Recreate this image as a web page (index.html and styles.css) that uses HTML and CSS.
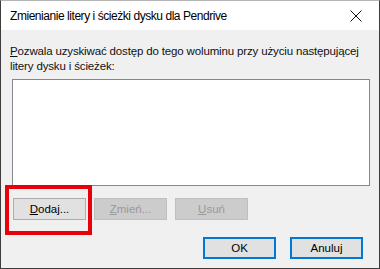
FILE: index.html
```html
<!DOCTYPE html>
<html lang="pl">
<head>
    <meta charset="UTF-8">
    <title>Zmienianie litery i ścieżki dysku</title>
    <link rel="stylesheet" href="styles.css">
</head>
<body>

    <div class="window">
        <div class="titlebar">
            <span class="title">Zmienianie litery i ścieżki dysku dla Pendrive</span>
            <svg class="close" width="12" height="12" viewBox="0 0 12 12">
                <path d="M0.5 0.5 L11.5 11.5 M11.5 0.5 L0.5 11.5" stroke="#111" stroke-width="1" fill="none"/>
            </svg>
        </div>

        <div class="content">
            <p class="label"><u>P</u>ozwala uzyskiwać dostęp do tego woluminu przy użyciu następującej<br>litery dysku i ścieżek:</p>

            <div class="listbox"></div>

            <div class="row actions">
                <button class="btn"><u>D</u>odaj...</button>
                <button class="btn" disabled><u>Z</u>mień...</button>
                <button class="btn" disabled><u>U</u>suń</button>
                <div class="highlight"></div>
            </div>

            <div class="row footer">
                <button class="btn default">OK</button>
                <button class="btn default">Anuluj</button>
            </div>
        </div>
    </div>

</body>
</html>
```

FILE: styles.css
```css
body {
    margin: 0;
    font-family: "Liberation Sans", Arial, sans-serif;
    font-size: 11.5px;
    color: #000;
}
.window {
    width: 380px;
    height: 269px;
    box-sizing: border-box;
    border: 1px solid #3c3c3c;
    border-top-color: #b4b4b4;
    background-color: #f0f0f0;
}
.titlebar {
    height: 29px;
    background-color: #fff;
    display: flex;
    align-items: center;
    justify-content: space-between;
    padding: 0 17px 0 9px;
}
.title {
    font-size: 12px;
    letter-spacing: -0.45px;
    color: #000;
    white-space: nowrap;
}
.content {
    padding: 14px 9px 0 9px;
}
.label {
    margin: 0;
    line-height: 15px;
    letter-spacing: -0.15px;
    color: #111;
    white-space: nowrap;
}
.listbox {
    margin: 5px 0 0 2px;
    width: 358px;
    height: 107px;
    box-sizing: border-box;
    background-color: #fff;
    border: 1px solid #828790;
}
.row {
    display: flex;
    gap: 8px;
}
.actions {
    position: relative;
    margin: 12px 0 0 3px;
}
.footer {
    justify-content: flex-end;
    gap: 14px;
    margin: 17px 7px 0 0;
}
.btn {
    width: 73px;
    height: 22px;
    padding: 0;
    font-family: inherit;
    font-size: 11.5px;
    color: #000;
    background-color: #e1e1e1;
    border: 1px solid #adadad;
}
.btn:disabled {
    color: #9a9a9a;
    background-color: #cccccc;
    border-color: #bfbfbf;
}
.default {
    border: 2px solid #0078d7;
}
.highlight {
    position: absolute;
    left: -8px;
    top: -13px;
    width: 87px;
    height: 50px;
    box-sizing: border-box;
    border: 4px solid #e8000b;
}
```
